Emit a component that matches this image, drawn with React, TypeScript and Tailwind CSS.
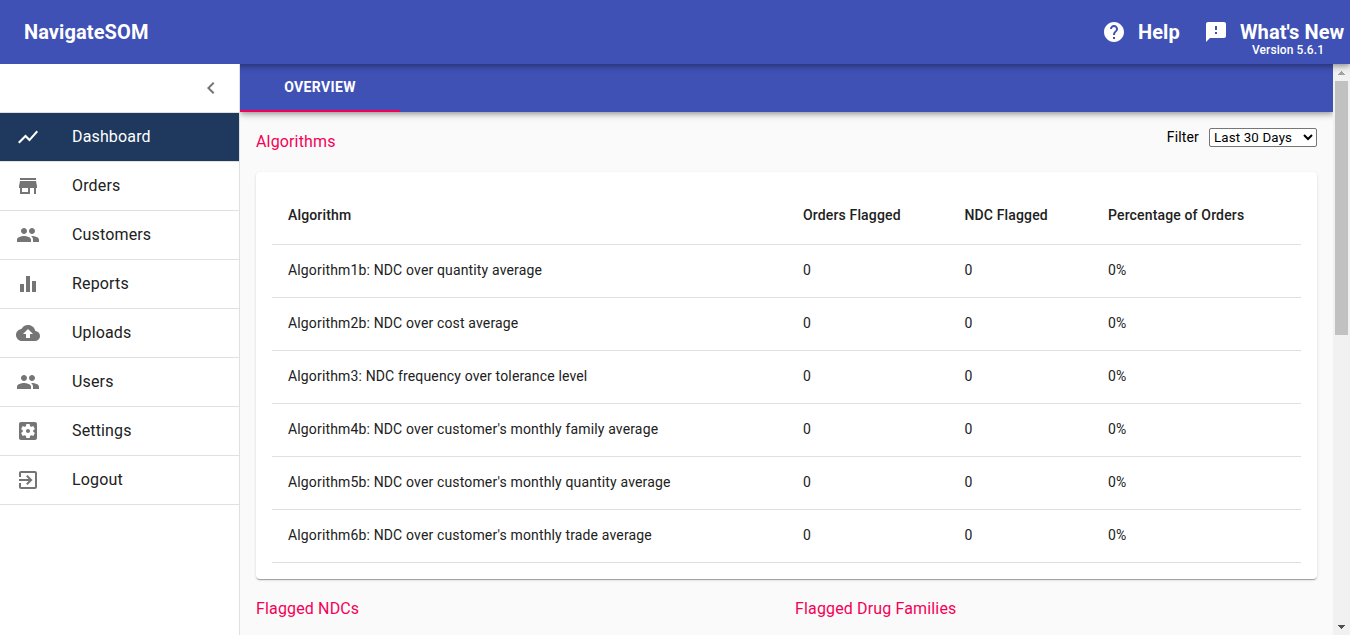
import React from "react";

const icons = {
  chart: "M3.5 18.49l6-6.01 4 4L22 6.92l-1.41-1.41-7.09 7.97-4-4L2 16.99z",
  store: "M20 4H4v2h16V4zm1 10v-2l-1-5H4l-1 5v2h1v6h10v-6h4v6h2v-6h1zm-9 4H6v-4h6v4z",
  people:
    "M16 11c1.66 0 2.99-1.34 2.99-3S17.66 5 16 5c-1.66 0-3 1.34-3 3s1.34 3 3 3zm-8 0c1.66 0 2.99-1.34 2.99-3S9.66 5 8 5C6.34 5 5 6.34 5 8s1.34 3 3 3zm0 2c-2.33 0-7 1.17-7 3.5V19h14v-2.5c0-2.33-4.67-3.5-7-3.5zm8 0c-.29 0-.62.02-.97.05 1.16.84 1.97 1.97 1.97 3.45V19h6v-2.5c0-2.33-4.67-3.5-7-3.5z",
  bars: "M10 20h4V4h-4v16zm-6 0h4v-8H4v8zM16 9v11h4V9h-4z",
  cloud:
    "M19.35 10.04C18.67 6.59 15.64 4 12 4 9.11 4 6.6 5.64 5.35 8.04 2.34 8.36 0 10.91 0 14c0 3.31 2.69 6 6 6h13c2.76 0 5-2.24 5-5 0-2.64-2.05-4.78-4.65-4.96zM14 13v4h-4v-4H7l5-5 5 5h-3z",
  settings:
    "M12 10c-1.1 0-2 .9-2 2s.9 2 2 2 2-.9 2-2-.9-2-2-2zm7-7H5c-1.11 0-2 .9-2 2v14c0 1.1.89 2 2 2h14c1.11 0 2-.9 2-2V5c0-1.1-.89-2-2-2zm-1.75 9c0 .23-.02.46-.05.68l1.48 1.16c.13.11.17.3.08.45l-1.4 2.42c-.09.15-.27.21-.43.15l-1.74-.7c-.36.28-.76.51-1.18.69l-.26 1.85c-.03.17-.18.3-.35.3h-2.8c-.17 0-.32-.13-.35-.29l-.26-1.85c-.43-.18-.82-.41-1.18-.69l-1.74.7c-.16.06-.34 0-.43-.15l-1.4-2.42c-.09-.15-.05-.34.08-.45l1.48-1.16c-.03-.23-.05-.46-.05-.69 0-.23.02-.46.05-.68l-1.48-1.16c-.13-.11-.17-.3-.08-.45l1.4-2.42c.09-.15.27-.21.43-.15l1.74.7c.36-.28.76-.51 1.18-.69l.26-1.85c.03-.17.18-.3.35-.3h2.8c.17 0 .32.13.35.29l.26 1.85c.43.18.82.41 1.18.69l1.74-.7c.16-.06.34 0 .43.15l1.4 2.42c.09.15.05.34-.08.45l-1.48 1.16c.03.23.05.46.05.69z",
  exit: "M10.09 15.59L11.5 17l5-5-5-5-1.41 1.41L12.67 11H3v2h9.67l-2.58 2.59zM19 3H5c-1.11 0-2 .9-2 2v4h2V5h14v14H5v-4H3v4c0 1.1.89 2 2 2h14c1.1 0 2-.9 2-2V5c0-1.1-.9-2-2-2z",
  help: "M12 2C6.48 2 2 6.48 2 12s4.48 10 10 10 10-4.48 10-10S17.52 2 12 2zm1 17h-2v-2h2v2zm2.07-7.75l-.9.92C13.45 12.9 13 13.5 13 15h-2v-.5c0-1.1.45-2.1 1.17-2.83l1.24-1.26c.37-.36.59-.86.59-1.41 0-1.1-.9-2-2-2s-2 .9-2 2H8c0-2.21 1.79-4 4-4s4 1.79 4 4c0 .88-.36 1.68-.93 2.25z",
  feedback:
    "M20 2H4c-1.1 0-1.99.9-1.99 2L2 22l4-4h14c1.1 0 2-.9 2-2V4c0-1.1-.9-2-2-2zm-7 12h-2v-2h2v2zm0-4h-2V6h2v4z",
  left: "M15.41 7.41L14 6l-6 6 6 6 1.41-1.41L10.83 12z",
};

type IconName = keyof typeof icons;

function Icon({ name, className = "" }: { name: IconName; className?: string }) {
  return (
    <svg viewBox="0 0 24 24" fill="currentColor" className={`h-6 w-6 shrink-0 ${className}`}>
      <path d={icons[name]} />
    </svg>
  );
}

const menu: { label: string; icon: IconName; active?: boolean }[] = [
  { label: "Dashboard", icon: "chart", active: true },
  { label: "Orders", icon: "store" },
  { label: "Customers", icon: "people" },
  { label: "Reports", icon: "bars" },
  { label: "Uploads", icon: "cloud" },
  { label: "Users", icon: "people" },
  { label: "Settings", icon: "settings" },
  { label: "Logout", icon: "exit" },
];

const algorithms = [
  "Algorithm1b: NDC over quantity average",
  "Algorithm2b: NDC over cost average",
  "Algorithm3: NDC frequency over tolerance level",
  "Algorithm4b: NDC over customer's monthly family average",
  "Algorithm5b: NDC over customer's monthly quantity average",
  "Algorithm6b: NDC over customer's monthly trade average",
];

const grid = "grid grid-cols-[515px_161.4px_143.6px_209px] border-b border-[#e0e0e0] pb-[2px]";
const appBarShadow =
  "shadow-[0px_2px_4px_-1px_rgba(0,0,0,0.2),0px_4px_5px_0px_rgba(0,0,0,0.14),0px_1px_10px_0px_rgba(0,0,0,0.12)]";

function Header() {
  return (
    <header
      className={`relative z-10 flex h-16 shrink-0 items-center bg-[#3f51b5] pl-6 text-xl font-bold tracking-[0.1px] text-white ${appBarShadow}`}
    >
      <h1 className="grow leading-8">NavigateSOM</h1>
      <Icon name="help" />
      <span className="ml-3 w-[66px]">Help</span>
      <Icon name="feedback" />
      <div className="relative ml-3 w-[110px] whitespace-nowrap">
        What's New
        <span className="absolute left-3 top-[22px] text-xs font-medium leading-5 tracking-[0.08px]">
          Version 5.6.1
        </span>
      </div>
    </header>
  );
}

function Sidebar() {
  return (
    <nav className="relative z-20 w-60 shrink-0 border-r border-[#e0e0e0] bg-white">
      <div className="flex h-[49px] items-center justify-end border-b border-[#e0e0e0] pr-4 text-[#757575]">
        <Icon name="left" />
      </div>
      {menu.map((item) => (
        <div
          key={item.label}
          className={`flex h-[49px] items-center border-b border-[#e0e0e0] bg-clip-padding pl-4 ${
            item.active ? "bg-[#1f385d] text-white" : "text-[#757575]"
          }`}
        >
          <Icon name={item.icon} />
          <span
            className={`ml-8 pb-px text-base tracking-[0.15px] ${item.active ? "text-white" : "text-[#212121]"}`}
          >
            {item.label}
          </span>
        </div>
      ))}
    </nav>
  );
}

function AlgorithmTable() {
  return (
    <section className="mx-4 rounded bg-white p-4 text-sm leading-5 tracking-[0.15px] text-[#212121] shadow-[0px_2px_1px_-1px_rgba(0,0,0,0.2),0px_1px_1px_0px_rgba(0,0,0,0.14),0px_1px_3px_0px_rgba(0,0,0,0.12)]">
      <div className={`${grid} h-[57px] items-center font-medium`}>
        <span className="pl-4">Algorithm</span>
        <span className="pl-4">Orders Flagged</span>
        <span className="pl-4">NDC Flagged</span>
        <span className="pl-4">Percentage of Orders</span>
      </div>
      {algorithms.map((name) => (
        <div key={name} className={`${grid} h-[53px] items-center`}>
          <span className="pl-4">{name}</span>
          <span className="pl-4">0</span>
          <span className="pl-4">0</span>
          <span className="pl-4">0%</span>
        </div>
      ))}
    </section>
  );
}

function Scrollbar() {
  return (
    <div className="flex w-[17px] shrink-0 flex-col items-center bg-[#f1f1f1]">
      <div className="flex h-[17px] shrink-0 items-center">
        <svg width="7" height="4" viewBox="0 0 7 4" fill="#a3a3a3" shapeRendering="crispEdges">
          <path d="M3 0h1v1h1v1h1v1h1v1H0V3h1V2h1V1h1z" />
        </svg>
      </div>
      <div className="h-[254px] w-[13px] shrink-0 bg-[#c1c1c1]" />
      <div className="grow" />
      <div className="flex h-[17px] shrink-0 items-center">
        <svg width="7" height="4" viewBox="0 0 7 4" fill="#505050" shapeRendering="crispEdges">
          <path d="M0 0h7v1H6v1H5v1H4v1H3V3H2V2H1V1H0z" />
        </svg>
      </div>
    </div>
  );
}

export default function App() {
  return (
    <div className="flex h-[635px] w-[1350px] flex-col overflow-hidden bg-[#fafafa] font-['Roboto',sans-serif]">
      <Header />
      <div className="flex min-h-0 grow">
        <Sidebar />
        <div className="flex min-w-0 grow overflow-hidden">
          <main className="w-[1093px] shrink-0 overflow-hidden">
            <div className={`flex h-12 bg-[#3f51b5] ${appBarShadow}`}>
              <div className="flex w-40 items-center justify-center border-b-2 border-[#f50057] text-sm font-bold tracking-[0.37px] text-white">
                OVERVIEW
              </div>
            </div>
            <div className="flex h-[60px] justify-between px-4 pt-4">
              <h2 className="pt-[2px] text-base leading-6 tracking-[0.15px] text-[#f50057]">Algorithms</h2>
              <label className="flex h-[19px] items-center text-sm tracking-[0.15px] text-black">
                <span className="pb-[2px]">Filter</span>
                <select className="ml-[10px] h-[19px] w-[108px] rounded-[2px] border border-[#767676] bg-white text-[13.333px] leading-none tracking-[0.15px] text-black">
                  <option>Last 30 Days</option>
                </select>
              </label>
            </div>
            <AlgorithmTable />
            <div className="flex px-4 pt-[18px] text-base leading-6 tracking-[0.15px] text-[#f50057]">
              <h2 className="w-[539px]">Flagged NDCs</h2>
              <h2>Flagged Drug Families</h2>
            </div>
          </main>
          <Scrollbar />
        </div>
      </div>
    </div>
  );
}
